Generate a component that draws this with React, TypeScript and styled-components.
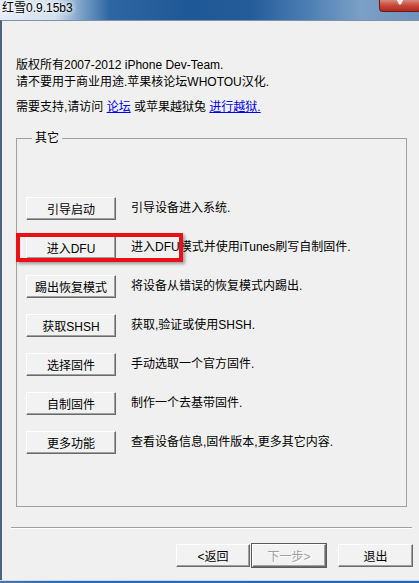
import React from "react"
import styled, { createGlobalStyle } from "styled-components"

const GlobalStyle = createGlobalStyle`
  html, body {
    margin: 0;
    padding: 0;
    background: #f0f0f0;
  }
  * {
    box-sizing: border-box;
  }
`

const FONT = `"Liberation Sans", "Noto Sans CJK SC", sans-serif`

const Window = styled.div`
  width: 419px;
  height: 583px;
  display: flex;
  flex-direction: column;
  overflow: hidden;
  font-family: ${FONT};
  font-size: 12px;
  color: #000;
`

const TitleBar = styled.div`
  height: 20px;
  flex: none;
  display: flex;
  justify-content: space-between;
  align-items: flex-start;
  background: linear-gradient(
    90deg,
    #e4edf7 0,
    #d2e0ef 55px,
    #7fa3c9 80px,
    #2d66a2 110px,
    #1f5896 190px,
    #235c99 250px,
    #4f80b4 310px,
    #7b9fc5 360px,
    #6f93bd 419px
  );
`

const Title = styled.span`
  padding: 1px 0 0 2px;
  line-height: 14px;
  font-size: 12px;
  color: #000;
  text-shadow: 0 0 4px #fff, 0 0 6px #fff;
`

const CloseButton = styled.div`
  width: 42px;
  height: 12px;
  margin-right: -2px;
  display: flex;
  justify-content: center;
  align-items: flex-start;
  border: 1px solid #5b2119;
  border-top: none;
  border-radius: 0 0 4px 4px;
  background: linear-gradient(180deg, #d98a7a 0, #c9483a 50%, #b5291c 100%);
`

const Body = styled.div`
  flex: 1;
  display: flex;
  flex-direction: column;
  border-top: 1px solid #7f91a6;
  border-left: 2px solid #4f6279;
  padding-top: 36px;
`

const Intro = styled.div`
  padding-left: 14px;
  line-height: 17px;
`

const Support = styled(Intro)`
  margin-top: 8px;
`

const Link = styled.a`
  color: #0000ee;
  text-decoration: underline;
`

const GroupBox = styled.fieldset`
  margin: 14px 0 0 14px;
  width: 391px;
  padding: 51px 0 52px 9px;
  border: 1px solid #a0a0a0;
  display: flex;
  flex-direction: column;
  gap: 16px;
`

const GroupLegend = styled.legend`
  margin-left: 6px;
  padding: 0 3px;
  line-height: 16px;
`

const Row = styled.div`
  position: relative;
  display: flex;
  align-items: center;
  gap: 15px;
`

const Desc = styled.span`
  line-height: 17px;
`

const ClassicButton = styled.button<{ $width: number; $default?: boolean }>`
  width: ${(p) => p.$width}px;
  height: 23px;
  padding: 0;
  font-family: ${FONT};
  font-size: 12px;
  color: ${(p) => (p.$default ? "#a0a0a0" : "#000")};
  text-shadow: ${(p) => (p.$default ? "1px 1px 0 #fff" : "none")};
  background: #f2f2f2;
  border: 1px solid;
  border-color: #fff #6a6a6a #6a6a6a #fff;
  box-shadow: ${(p) =>
    p.$default
      ? "inset -1px -1px 0 #a0a0a0, 0 0 0 1px #5a5a5a"
      : "inset -1px -1px 0 #a0a0a0"};
  border-radius: 0;
  cursor: default;
  &:focus {
    outline: none;
  }
`

const Highlight = styled.div`
  position: absolute;
  left: -10px;
  top: -3px;
  width: 167px;
  height: 29px;
  border: 4px solid #ea1018;
  box-shadow: 2px 2px 3px rgba(0, 0, 0, 0.35);
  pointer-events: none;
`

const Separator = styled.div`
  margin: 20px 0 0 9px;
  width: 401px;
  height: 2px;
  border-top: 1px solid #a0a0a0;
  border-bottom: 1px solid #fff;
`

const Footer = styled.div`
  margin-top: 15px;
  padding-right: 6px;
  display: flex;
  justify-content: flex-end;
  gap: 2px;
`

const FooterGap = styled.div`
  width: 8px;
`

const BottomFrame = styled.div`
  height: 3px;
  flex: none;
  border-top: 1px solid #c6d8ec;
  background: linear-gradient(90deg, #4d76a2 0, #2f6cab 60px, #2a66a6 100%);
`

const actions = [
  { label: "引导启动", desc: "引导设备进入系统." },
  { label: "进入DFU", desc: "进入DFU模式并使用iTunes刷写自制固件.", mark: true },
  { label: "踢出恢复模式", desc: "将设备从错误的恢复模式内踢出." },
  { label: "获取SHSH", desc: "获取,验证或使用SHSH." },
  { label: "选择固件", desc: "手动选取一个官方固件." },
  { label: "自制固件", desc: "制作一个去基带固件." },
  { label: "更多功能", desc: "查看设备信息,固件版本,更多其它内容." },
]

export default function App() {
  return (
    <>
      <GlobalStyle />
      <Window>
        <TitleBar>
          <Title>红雪0.9.15b3</Title>
          <CloseButton>
            {/* only the lower half of the X shows, the rest is off screen */}
            <svg width="12" height="6" viewBox="0 0 12 6">
              <path
                d="M1 -4 L7 4 M11 -4 L5 4"
                stroke="#fff"
                strokeWidth="2.2"
                fill="none"
              />
            </svg>
          </CloseButton>
        </TitleBar>
        <Body>
          <Intro>
            版权所有2007-2012 iPhone Dev-Team.
            <br />
            请不要用于商业用途.苹果核论坛WHOTOU汉化.
          </Intro>
          <Support>
            需要支持,请访问 <Link>论坛</Link> 或苹果越狱兔 <Link>进行越狱.</Link>
          </Support>
          <GroupBox>
            <GroupLegend>其它</GroupLegend>
            {actions.map((item) => (
              <Row key={item.label}>
                <ClassicButton $width={90}>{item.label}</ClassicButton>
                <Desc>{item.desc}</Desc>
                {item.mark && <Highlight />}
              </Row>
            ))}
          </GroupBox>
          <Separator />
          <Footer>
            <ClassicButton $width={74}>&lt;返回</ClassicButton>
            <ClassicButton $width={74} $default>
              下一步&gt;
            </ClassicButton>
            <FooterGap />
            <ClassicButton $width={75}>退出</ClassicButton>
          </Footer>
        </Body>
        <BottomFrame />
      </Window>
    </>
  )
}
